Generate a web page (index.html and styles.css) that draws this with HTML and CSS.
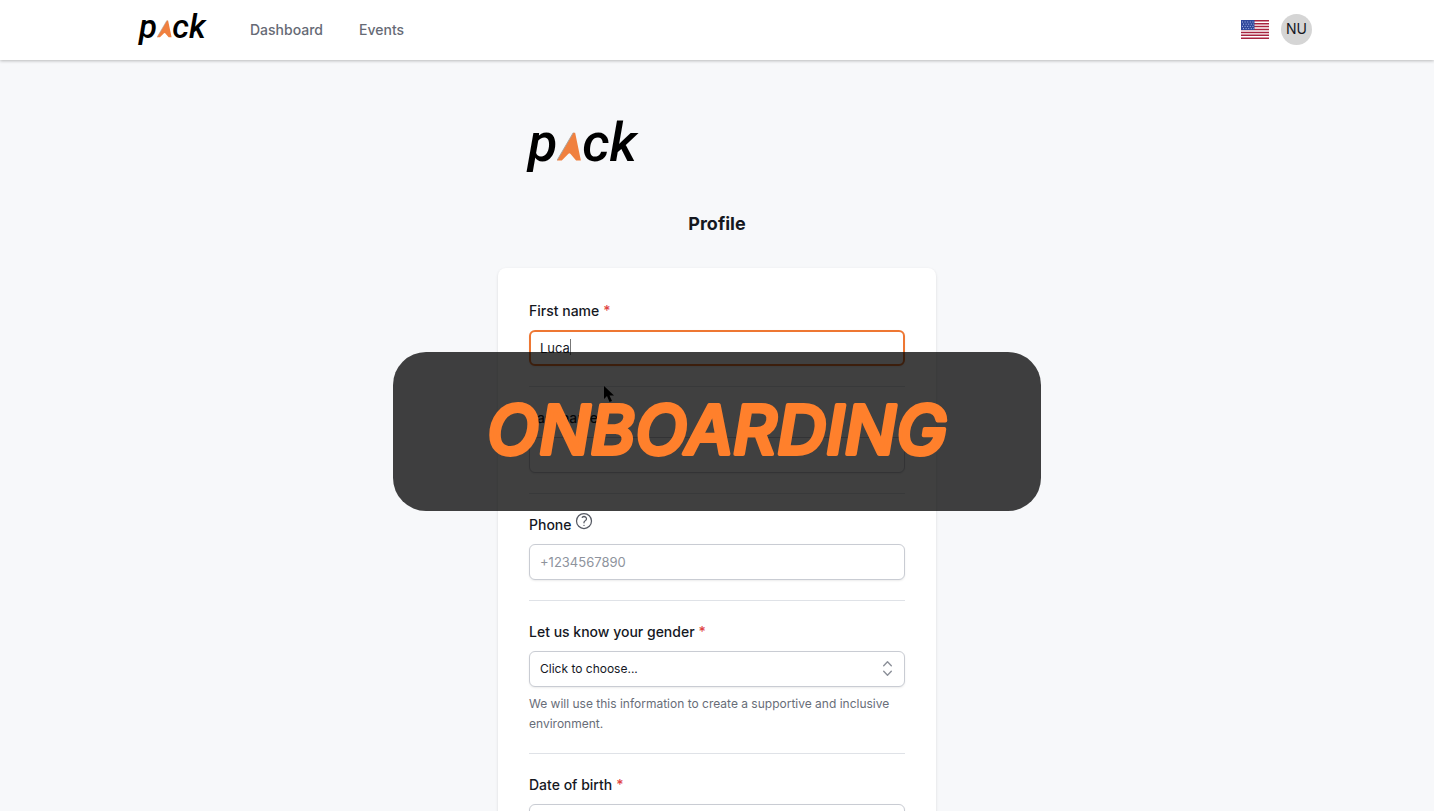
FILE: index.html
```html
<!DOCTYPE html>
<html lang="en">
<head>
<meta charset="utf-8">
<meta name="viewport" content="width=device-width, initial-scale=1">
<title>Pack - Profile</title>
<link rel="stylesheet" href="styles.css">
</head>
<body>
<header class="topbar">
  <div class="topbar-inner">
    <a class="logo logo-small" href="#" aria-label="pack"><span>p</span><svg class="logo-mark" viewBox="0 0 26 29" aria-hidden="true"><path d="M17 0h2l6 29h-5l-6-7q-1-1-2 0l-7 7H0Z" fill="#f0803f"/><path d="M17 0 0 29" stroke="#aaa39c" fill="none"/></svg><span>ck</span></a>
    <nav class="nav">
      <a href="#">Dashboard</a>
      <a href="#">Events</a>
    </nav>
    <div class="account">
      <button class="flag" type="button" aria-label="Language: English">
        <svg viewBox="0 0 28 19" aria-hidden="true">
          <path fill="#fff" d="M0 0h28v19H0z"/>
          <path stroke="#a8243f" stroke-width="1.5" d="M0 .75h28M0 3.7h28M0 6.6h28M0 9.5h28M0 12.4h28M0 15.3h28M0 18.25h28"/>
          <path fill="#2f489c" d="M0 0h13.500v10H0z"/>
          <path stroke="#a9b7e6" stroke-dasharray="1 1.600" d="M1 2h12M2 4.200h11M1 6.400h12M2 8.600h11"/>
        </svg>
      </button>
      <button class="avatar" type="button">NU</button>
    </div>
  </div>
</header>

<main class="page">
  <div class="logo logo-large" role="img" aria-label="pack"><span>p</span><svg class="logo-mark" viewBox="0 0 26 29" aria-hidden="true"><path d="M17 0h2l6 29h-5l-6-7q-1-1-2 0l-7 7H0Z" fill="#f0803f"/><path d="M17 0 0 29" stroke="#aaa39c" fill="none"/></svg><span>ck</span></div>
  <h1 class="title">Profile</h1>
  <form class="card">
    <div class="field">
      <label for="first">First name <span class="required">*</span></label>
      <div class="control">
        <input class="box active" id="first" type="text" value="Luca">
        <span class="caret"></span>
      </div>
    </div>
    <div class="field">
      <label for="last">Last name <span class="required">*</span></label>
      <input class="box" id="last" type="text">
    </div>
    <div class="field">
      <label for="phone">Phone
        <svg class="help" viewBox="0 0 24 24" aria-hidden="true"><path d="M9.880 7.520c1.170-1.030 3.070-1.030 4.240 0 1.170 1.020 1.170 2.690 0 3.710-.2.180-.42.330-.67.450-.75.380-1.450 1.020-1.450 1.820v.75M21 12a9 9 0 1 1-18 0 9 9 0 0 1 18 0ZM12 17.250h.01"/></svg>
      </label>
      <input class="box" id="phone" type="tel" placeholder="+1234567890">
    </div>
    <div class="field">
      <label for="gender">Let us know your gender <span class="required">*</span></label>
      <div class="control">
        <select class="box" id="gender"><option>Click to choose...</option></select>
        <svg class="chevrons" viewBox="0 0 20 20" aria-hidden="true"><path d="m6 7 4-4 4 4M6 13l4 4 4-4"/></svg>
      </div>
      <p class="hint">We will use this information to create a supportive and inclusive environment.</p>
    </div>
    <div class="field">
      <label for="birth">Date of birth <span class="required">*</span></label>
      <input class="box" id="birth" type="text">
    </div>
  </form>
</main>

<svg class="pointer" viewBox="0 0 12 18" aria-hidden="true"><path d="M1 1v13l3-3 2.500 6 2.500-1-2.500-5.500H11Z"/></svg>
<div class="banner">
  <svg class="banner-text" viewBox="0 0 648 158" role="img" aria-label="ONBOARDING"><text x="324" y="102" text-anchor="middle">ONBOARDING</text></svg>
</div>
</body>
</html>
```
FILE: styles.css
```css
* { box-sizing: border-box; }
body {
  margin: 0;
  min-height: 100vh;
  background: #f7f8fa;
  color: #15181f;
  font: 14px/20px Inter, "Liberation Sans", sans-serif;
  overflow: hidden;
}
button, input, select { font: inherit; color: inherit; }
.topbar { background: #fff; box-shadow: 0 1px 3px rgba(0, 0, 0, .25); }
.topbar-inner {
  display: flex;
  align-items: center;
  max-width: 1190px;
  height: 60px;
  margin: 0 auto;
  padding-left: 17px;
}
.logo {
  display: flex;
  align-items: baseline;
  color: #000;
  font-family: Roboto, sans-serif;
  font-style: italic;
  font-weight: 500;
  text-decoration: none;
}
.logo-small { width: 67px; padding-bottom: 7px; font-size: 33px; line-height: 40px; }
.logo-large { height: 84px; padding: 3px 30px 0; font-size: 54px; line-height: 64px; }
.logo-mark { width: .46em; height: .54em; flex: none; }
.nav { display: flex; gap: 36px; margin-left: 44px; font-weight: 500; }
.nav a { color: #666a75; text-decoration: none; }
.account { display: flex; align-items: center; gap: 12px; margin-left: auto; padding-bottom: 2px; }
.flag { display: flex; width: 28px; padding: 0; border: 0; background: none; }
.flag svg { width: 28px; height: 19px; }
.avatar {
  width: 31px;
  height: 31px;
  padding: 0;
  border: 0;
  border-radius: 50%;
  background: #d5d5d5;
}
.page { width: 100%; max-width: 438px; margin: 0 auto; padding-top: 48px; }
.title {
  margin: 16px 0 28px;
  font-size: 18px;
  line-height: 32px;
  font-weight: 700;
  text-align: center;
}
.card {
  padding: 12px 31px 32px;
  border-radius: 8px;
  background: #fff;
  box-shadow: 0 1px 3px rgba(0, 0, 0, .12);
}
.field { padding: 19px 0 20px; border-bottom: 1px solid #dfe2e7; }
.field label { display: flex; gap: 4px; line-height: 24px; margin-bottom: 7px; font-weight: 500; }
.required { color: #e04444; }
.control { position: relative; }
.box {
  display: block;
  width: 100%;
  height: 36px;
  padding: 0 10px;
  border: 1px solid #c9ccd3;
  border-radius: 6px;
  background: #fff;
  box-shadow: 0 1px 2px rgba(0, 0, 0, .08);
  appearance: none;
  outline: 0;
  font-size: 13px;
}
select.box { font-size: 12px; }
.box.active { padding: 0 9px; border: 2px solid #ee7733; }
.box::placeholder { color: #8e939d; opacity: 1; }
.caret { position: absolute; left: 41px; top: 9px; width: 1px; height: 16px; background: #777; }
.help { width: 20px; height: 20px; margin: -2px 0 0 -2px; fill: none; stroke: #555963; stroke-width: 1.500; stroke-linecap: round; stroke-linejoin: round; }
.chevrons { position: absolute; right: 8px; top: 8px; width: 19px; height: 19px; fill: none; stroke: #8c9099; stroke-width: 1.500; stroke-linecap: round; stroke-linejoin: round; }
.hint { margin: 7px 0 -1px; color: #686d78; font-size: 12px; }
.banner {
  position: absolute;
  top: 352px;
  left: 50%;
  width: 648px;
  height: 159px;
  border-radius: 33px;
  background: rgba(0, 0, 0, .75);
  transform: translateX(-50%);
}
.banner-text { display: block; width: 100%; height: 158px; }
.banner-text text {
  font: italic 500 68px Inter, sans-serif;
  fill: #ff802c;
  stroke: #ff802c;
  stroke-width: 4px;
  stroke-linejoin: round;
}
.pointer { position: absolute; left: 603px; top: 385px; width: 12px; height: 18px; z-index: 1; }
```
